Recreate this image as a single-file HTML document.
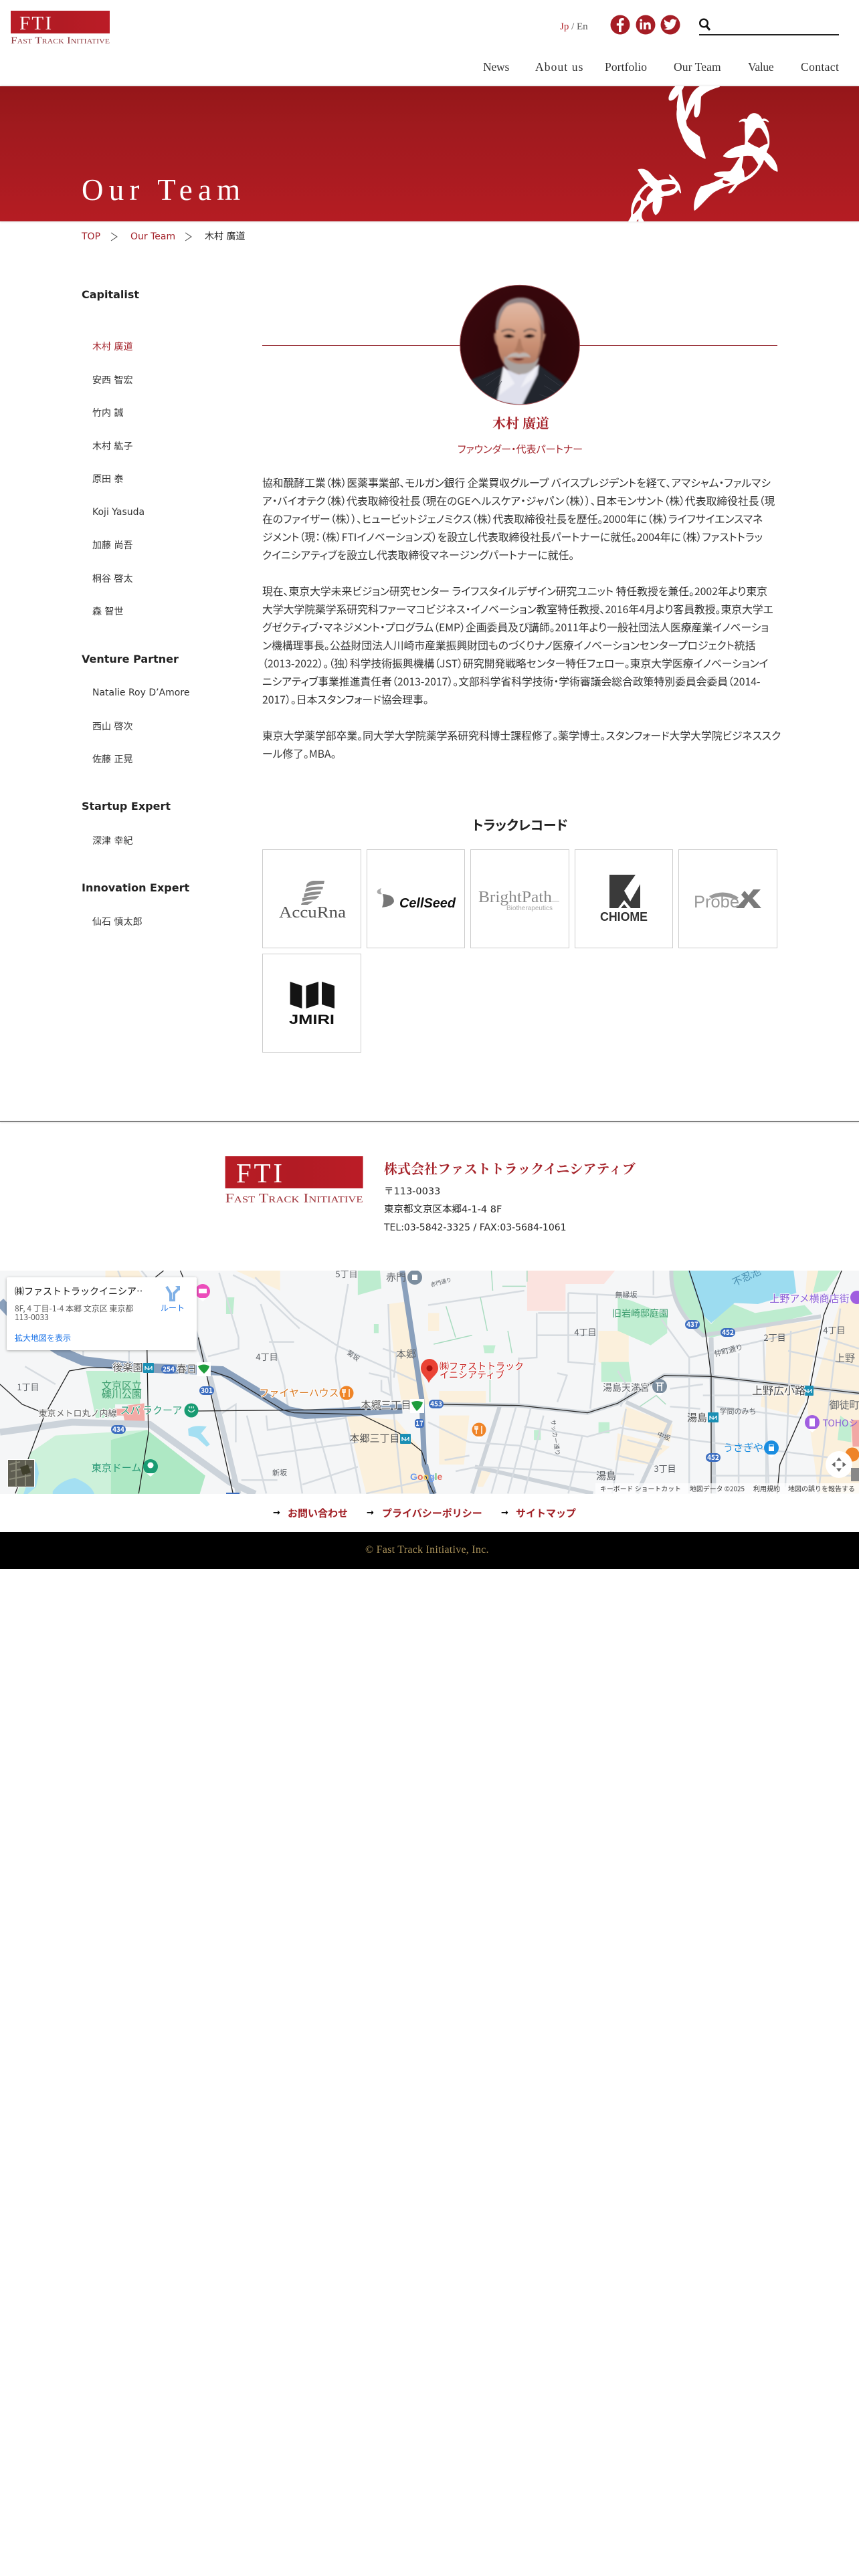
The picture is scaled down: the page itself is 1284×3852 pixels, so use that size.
<!DOCTYPE html>
<html lang="ja"><head><meta charset="utf-8"><title>木村 廣道 | Our Team</title>
<style>
html,body{margin:0;padding:0;background:#fff}
#p{position:relative;width:1284px;height:3852px;overflow:hidden;background:#fff;font-family:"DejaVu Sans","Noto Sans CJK JP",sans-serif;color:#222}
.a{position:absolute;white-space:nowrap}
.n{font-family:"Liberation Serif",serif;font-size:17.500px;line-height:24px;top:88px;color:#333}
.s{left:122px;font-weight:bold;font-size:16px;line-height:24px;color:#222}
.m{left:138px;font-size:14px;line-height:24px;color:#333}
.b{left:392px;font-family:"Noto Sans CJK JP",sans-serif;font-size:15.800px;line-height:27px;color:#333;font-feature-settings:"palt"}
.c{box-sizing:border-box;width:148px;height:148px;border:1px solid #ccc;top:1270px}
.l{font-family:"Noto Sans CJK JP",sans-serif;font-weight:bold;font-size:15px;line-height:24px;top:2251px;color:#a11f25}
.ar{font-family:"DejaVu Sans",sans-serif;font-size:13px;line-height:24px;top:2251px;color:#000;font-weight:bold}
svg text{font-family:"Noto Sans CJK JP",sans-serif}
.mp path{vector-effect:non-scaling-stroke}
</style></head><body><div id="p">

<!-- header logo -->
<svg class="a" style="left:0;top:0" width="180" height="72">
<defs><linearGradient id="lg" x1="0" x2="1"><stop offset="0" stop-color="#b81c25"/><stop offset=".5" stop-color="#b21b24"/><stop offset="1" stop-color="#bb1c26"/></linearGradient></defs>
<rect x="16" y="16" width="148" height="34" fill="url(#lg)"/>
<text x="29" y="44" fill="#fff" textLength="48" lengthAdjust="spacing" style="font-family:'Liberation Serif',serif;font-size:29px">FTI</text>
<text x="16" y="65" fill="#8f3a40" textLength="148" lengthAdjust="spacingAndGlyphs" style="font-family:'Liberation Serif',serif;font-size:14.5px;font-variant:small-caps">Fast Track Initiative</text>
</svg>

<!-- lang -->
<div class="a" style="left:837px;top:28px;font-family:'Liberation Serif',serif;font-size:15px;line-height:24px;color:#555"><span style="color:#b22a30">Jp</span> / En</div>
<!-- social -->
<svg class="a" style="left:910px;top:20px" width="110" height="36">
<circle cx="17" cy="17" r="14.5" fill="#a51d25"/><circle cx="55" cy="17" r="14.5" fill="#a51d25"/><circle cx="92" cy="17" r="14.5" fill="#a51d25"/>
<path d="M18.8 28v-9.6h3.2l.5-3.7h-3.7v-2.4c0-1.100.3-1.800 1.800-1.800h2v-3.300c-.4 0-1.500-.2-2.800-.2-2.800 0-4.800 1.700-4.800 4.900v2.800h-3.200v3.700h3.200V28z" fill="#fff"/>
<path d="M46.500 13.500h3.400V24h-3.400zM48.200 8.500a1.900 1.900 0 1 1 0 3.800 1.900 1.900 0 0 1 0-3.800zM52 13.500h3.200v1.500c.5-.9 1.700-1.800 3.400-1.800 3.500 0 4.200 2.300 4.200 5.300V24h-3.400v-4.800c0-1.200 0-2.700-1.700-2.700s-2 1.300-2 2.600V24H52z" fill="#fff"/>
<path d="M102 10.500c-.8.300-1.500.5-2.400.6.900-.5 1.500-1.300 1.800-2.300-.8.500-1.700.8-2.600 1a4.100 4.100 0 0 0-7 3.700c-3.400-.2-6.400-1.800-8.400-4.300-1.100 1.900-.5 4.300 1.300 5.500-.7 0-1.300-.2-1.900-.5 0 2 1.400 3.700 3.300 4.100-.6.200-1.200.2-1.900.1.500 1.600 2 2.800 3.800 2.800a8.300 8.300 0 0 1-6.100 1.700c1.800 1.200 4 1.800 6.300 1.800 7.600 0 11.900-6.400 11.700-12.200.8-.6 1.500-1.300 2.100-2z" fill="#fff"/>
</svg>
<!-- search -->
<svg class="a" style="left:1040px;top:24px" width="30" height="24"><circle cx="12" cy="10.500" r="5.800" fill="none" stroke="#111" stroke-width="2.400"/><path d="M16 15l5 6" stroke="#111" stroke-width="3"/></svg>
<div class="a" style="left:1045px;top:51px;width:209px;height:2px;background:#222"></div>

<!-- nav -->
<div class="a n" style="left:722px;letter-spacing:-.2px">News</div>
<div class="a n" style="left:800px;letter-spacing:1.100px">About us</div>
<div class="a n" style="left:904px;letter-spacing:.1px">Portfolio</div>
<div class="a n" style="left:1007px;letter-spacing:.1px">Our Team</div>
<div class="a n" style="left:1118px;letter-spacing:-.3px">Value</div>
<div class="a n" style="left:1197px;letter-spacing:.4px">Contact</div>

<!-- hero -->
<div class="a" style="left:0;top:129px;width:1284px;height:202px;background:linear-gradient(#951619,#a01a1e 30%,#b51c23);box-shadow:0 0 3px rgba(0,0,0,.25)"></div>
<div class="a" style="left:122px;top:256px;font-family:'Liberation Serif',serif;font-size:45px;line-height:56px;letter-spacing:8.200px;color:#fff">Our Team</div>
<svg class="a" style="left:900px;top:120px" width="384" height="220" viewBox="0 0 1152 660">
<g fill="#fff" fill-rule="evenodd" stroke="#fff" stroke-width="5" stroke-linejoin="round">
<path d="M330 28L365 28C358 45 345 58 332 72C322 85 310 92 302 88C296 75 312 45 330 28Z"/>
<path d="M355 40C345 65 335 100 338 130C332 165 342 205 358 240C372 285 410 330 462 350C458 325 440 300 436 255C420 240 395 232 378 205C370 170 372 130 392 85C402 60 418 40 440 28L525 28C490 38 462 50 442 72C438 95 442 125 434 150C428 168 416 170 414 150C414 125 420 105 420 95C405 115 392 140 378 175C368 130 358 85 355 40Z"/>
<path d="M682 150C700 150 712 165 716 178C722 172 735 172 745 186C735 180 726 178 720 182C735 205 750 240 748 280C750 300 735 312 735 325C765 345 785 375 785 408C760 400 742 372 725 352C718 380 700 405 670 432C650 448 625 452 605 470C590 490 578 508 568 505C575 490 590 478 602 462C570 468 540 478 510 495C480 510 445 560 415 582C410 550 425 500 445 478C480 470 525 452 555 432C540 432 515 435 503 422C520 405 560 415 575 410C600 385 605 360 625 340C600 345 565 350 545 340C565 315 600 295 640 292C648 270 640 230 642 205C645 185 640 182 628 182C622 182 618 185 616 186C624 176 640 172 650 178C655 165 665 150 682 150ZM650 275C655 260 672 245 680 228C690 205 712 205 722 225C735 245 745 265 745 285C730 290 715 300 705 306C690 300 665 290 650 275ZM630 340C640 335 660 335 675 338C685 350 695 365 703 378C698 390 690 410 640 440C630 425 640 405 625 395C620 375 635 360 630 340ZM540 445L580 455C565 470 550 470 538 462Z"/>
<path d="M163 402C185 395 205 405 220 425C232 438 240 448 252 452C270 445 300 445 320 452C310 440 308 432 302 425C315 432 325 442 330 452C345 462 348 480 352 505C348 498 345 490 340 485C335 505 310 518 280 516C262 525 248 530 238 535C255 530 265 528 268 530C265 555 262 590 240 602C228 590 225 570 232 540C210 550 190 565 178 590C172 610 176 620 185 632L165 632L165 615L152 632L120 632C128 620 135 612 132 590C132 545 165 485 210 462L195 450C180 430 172 418 163 402ZM265 470C285 462 315 460 330 466C335 478 328 490 315 492C300 498 285 505 270 500C262 492 262 480 265 470ZM210 470C195 478 180 495 168 515C165 530 185 545 205 545C190 525 225 500 232 490C225 485 218 478 210 470ZM135 600C140 570 150 535 175 535C180 550 175 570 155 590C145 600 140 608 135 600Z"/>
</g></svg>

<!-- breadcrumb -->
<div class="a" style="left:122px;top:342px;font-size:14px;line-height:24px;color:#a3222a">TOP</div>
<svg class="a" style="left:164px;top:346px" width="14" height="16"><path d="M2 2l9 6-9 6" fill="none" stroke="#444" stroke-width="1"/></svg>
<div class="a" style="left:195px;top:342px;font-size:14px;line-height:24px;color:#a3222a">Our Team</div>
<svg class="a" style="left:275px;top:346px" width="14" height="16"><path d="M2 2l9 6-9 6" fill="none" stroke="#444" stroke-width="1"/></svg>
<div class="a" style="left:306px;top:342px;font-size:14px;line-height:24px;color:#222">木村 廣道</div>

<!-- sidebar -->
<div class="a s" style="top:429px">Capitalist</div>
<div class="a m" style="top:507px;color:#a3222a">木村 廣道</div>
<div class="a m" style="top:557px">安西 智宏</div>
<div class="a m" style="top:606px">竹内 誠</div>
<div class="a m" style="top:656px">木村 紘子</div>
<div class="a m" style="top:705px">原田 泰</div>
<div class="a m" style="top:754px">Koji Yasuda</div>
<div class="a m" style="top:804px">加藤 尚吾</div>
<div class="a m" style="top:854px">桐谷 啓太</div>
<div class="a m" style="top:903px">森 智世</div>
<div class="a s" style="top:974px">Venture Partner</div>
<div class="a m" style="top:1024px">Natalie Roy D’Amore</div>
<div class="a m" style="top:1075px">西山 啓次</div>
<div class="a m" style="top:1124px">佐藤 正晃</div>
<div class="a s" style="top:1194px">Startup Expert</div>
<div class="a m" style="top:1246px">深津 幸紀</div>
<div class="a s" style="top:1316px">Innovation Expert</div>
<div class="a m" style="top:1367px">仙石 慎太郎</div>

<!-- rule + photo -->
<div class="a" style="left:392px;top:516px;width:770px;height:1px;background:#8f1c24"></div>
<svg class="a" style="left:640px;top:410px" width="300" height="300" viewBox="0 0 900 900">
<defs><clipPath id="ph"><circle cx="411" cy="317" r="267"/></clipPath>
<filter id="bl" x="-5%" y="-5%" width="110%" height="110%"><feGaussianBlur stdDeviation="4"/></filter>
<linearGradient id="sk" x1="0" y1="0" x2="0" y2="1"><stop offset="0" stop-color="#e2bcab"/><stop offset=".3" stop-color="#dba98f"/><stop offset=".65" stop-color="#c68c70"/><stop offset="1" stop-color="#a4705c"/></linearGradient>
<radialGradient id="bgp" cx=".5" cy=".4" r=".7"><stop offset="0" stop-color="#2c0508"/><stop offset="1" stop-color="#430a10"/></radialGradient></defs>
<g clip-path="url(#ph)">
<rect width="900" height="900" fill="url(#bgp)"/>
<g filter="url(#bl)">
<path d="M195 472L335 415L350 460L420 590L495 405L612 490L650 620L150 620Z" fill="#24262e"/>
<path d="M338 412C370 450 440 455 497 402L490 450L420 590L308 570Z" fill="#dfe0ec"/>
<path d="M338 410L388 490L316 545ZM497 402L470 470L415 510L440 460Z" fill="#f0f0f6"/>
<path d="M296 262C290 290 303 322 320 328L330 280ZM528 268C522 300 510 318 498 320L505 265Z" fill="#a87a66"/>
<path d="M303 250C298 170 340 105 415 105C485 105 522 165 520 255C518 330 500 420 410 450C350 440 320 380 312 330C308 300 303 280 303 250Z" fill="url(#sk)"/>
<path d="M303 250C298 180 335 105 415 105C485 105 522 165 520 255L508 248C510 210 492 165 462 140C430 122 385 124 352 145C328 170 318 205 314 250Z" fill="#8f8284"/>
<path d="M488 190Q512 240 502 320L480 410Q510 360 518 255Z" fill="#6f4c42" opacity=".6"/>
<path d="M340 400C358 440 400 455 440 445C472 432 494 405 498 372L480 392C462 405 440 400 418 402C390 404 360 390 342 368Z" fill="#a9a29f"/>
<path d="M348 378C365 352 395 348 408 358C425 348 450 350 460 374C440 368 420 372 405 374C385 368 365 372 348 378Z" fill="#bdb6b2"/>
<path d="M375 380Q405 372 432 380Q405 396 375 380Z" fill="#6e2a28"/>
<path d="M336 278Q360 260 388 280Q360 294 336 278ZM428 280Q455 258 480 278Q455 294 428 280Z" fill="#3c2526"/>
<circle cx="362" cy="277" r="8" fill="#100a0a"/><circle cx="452" cy="277" r="8" fill="#100a0a"/>
<path d="M328 258Q360 238 390 258M428 258Q458 236 486 256" fill="none" stroke="#6f5e58" stroke-width="7"/>
<path d="M405 290Q395 335 385 342Q408 354 432 342Q420 330 415 290Z" fill="#b07a60"/>
</g>
<path d="M240 470L300 440M260 500L325 450M290 540L330 480M520 450L590 500M520 500L570 530M500 540L560 560" stroke="#3a3c46" stroke-width="2"/>
</g>
<circle cx="411" cy="317" r="268" fill="none" stroke="#9e4a50" stroke-width="3"/>
</svg>
<div class="a" style="left:736px;top:618px;font-family:'Noto Serif CJK SC','Noto Serif CJK JP',serif;font-weight:bold;font-size:20px;line-height:28px;color:#a52229">木村 廣道</div>
<div class="a" style="left:684px;top:660px;font-family:'Noto Sans CJK JP',sans-serif;font-size:15px;line-height:24px;color:#a5282f;font-feature-settings:'palt'">ファウンダー・代表パートナー</div>

<!-- bio -->
<div class="a b" style="top:708px">協和醗酵工業（株）医薬事業部、モルガン銀行 企業買収グループ バイスプレジデントを経て、アマシャム・ファルマシ<br>ア・バイオテク（株）代表取締役社長（現在のGEヘルスケア・ジャパン（株））、日本モンサント（株）代表取締役社長（現<br>在のファイザー（株））、ヒュービットジェノミクス（株）代表取締役社長を歴任。2000年に（株）ライフサイエンスマネ<br>ジメント（現：（株）FTIイノベーションズ）を設立し代表取締役社長パートナーに就任。2004年に（株）ファストトラッ<br>クイニシアティブを設立し代表取締役マネージングパートナーに就任。<br><br>現在、東京大学未来ビジョン研究センター ライフスタイルデザイン研究ユニット 特任教授を兼任。2002年より東京<br>大学大学院薬学系研究科ファーマコビジネス・イノベーション教室特任教授、2016年4月より客員教授。東京大学エ<br>グゼクティブ・マネジメント・プログラム（EMP）企画委員及び講師。2011年より一般社団法人医療産業イノベーショ<br>ン機構理事長。公益財団法人川崎市産業振興財団ものづくりナノ医療イノベーションセンタープロジェクト統括<br>（2013-2022）。（独）科学技術振興機構（JST）研究開発戦略センター特任フェロー。東京大学医療イノベーションイ<br>ニシアティブ事業推進責任者（2013-2017）。文部科学省科学技術・学術審議会総合政策特別委員会委員（2014-<br>2017）。日本スタンフォード協会理事。<br><br>東京大学薬学部卒業。同大学大学院薬学系研究科博士課程修了。薬学博士。スタンフォード大学大学院ビジネススク<br>ール修了。MBA。</div>

<!-- track record -->
<div class="a" style="left:706px;top:1220px;font-family:'Noto Sans CJK JP',sans-serif;font-weight:bold;font-size:19.700px;line-height:26px;color:#222;font-feature-settings:'palt'">トラックレコード</div>
<div class="a c" style="left:392px"></div>
<div class="a c" style="left:548px;width:147px"></div>
<div class="a c" style="left:703px"></div>
<div class="a c" style="left:859px;width:147px"></div>
<div class="a c" style="left:1014px"></div>
<div class="a c" style="left:392px;top:1426px"></div>

<svg class="a" style="left:392px;top:1270px" width="772" height="305">
<!-- AccuRna -->
<g fill="#8c8c8c"><path d="M76 47Q67 49 66 54L66 57Q73 52 92 52L93 47ZM65 59Q73 55 91 56L90 60Q74 60 64 64ZM63 66Q74 63 88 63L87 67Q72 68 62 72ZM60 73Q72 70 85 70Q82 74 78 75Q68 75 60 78ZM59 80Q68 78 76 78L68 83H58Z"/></g>
<text x="25" y="102" textLength="100" lengthAdjust="spacingAndGlyphs" fill="#555" style="font-family:'Liberation Serif',serif;font-size:24px">AccuRna</text>
<!-- CellSeed -->
<path d="M178 58Q170 61 172 65Q174 68 179 67Q175 63 178 58Z" fill="#aaa"/>
<path d="M180 67Q197 68 197 78Q195 85 179 87Q183 77 180 67Z" fill="#777"/>
<text x="205" y="87" textLength="84" lengthAdjust="spacingAndGlyphs" fill="#111" style="font-family:'Liberation Sans',sans-serif;font-size:20px;font-weight:bold;font-style:italic">CellSeed</text>
<!-- BrightPath -->
<text x="323" y="79" textLength="110" lengthAdjust="spacingAndGlyphs" fill="#8a8a8a" style="font-family:'Liberation Serif',serif;font-size:24px">BrightPath</text>
<rect x="433" y="77" width="11" height="1" fill="#bbb"/>
<text x="365" y="91" textLength="69" lengthAdjust="spacingAndGlyphs" fill="#aaa" style="font-family:'Liberation Sans',sans-serif;font-size:10.5px">Biotherapeutics</text>
<!-- CHIOME -->
<path d="M519 38H558L541 62L550 78L565 52V88H551L541 76L532 88H519ZM541 82L546 88H536Z" fill="#3a3a3a"/>
<text x="505" y="107" textLength="71" lengthAdjust="spacingAndGlyphs" fill="#333" style="font-family:'Liberation Sans',sans-serif;font-size:18px;font-weight:bold">CHIOME</text>
<!-- ProbeX -->
<text x="645" y="87" textLength="68" lengthAdjust="spacingAndGlyphs" fill="#999" style="font-family:'Liberation Sans',sans-serif;font-size:25px">Probe</text>
<path d="M668 70Q690 58 712 72L708 76Q688 66 672 74Z" fill="#999"/>
<path d="M708 88H720L727 78L735 88H746L733 73L745 60H734L727 69L721 62L716 68L721 74Z" fill="#7a7a7a"/>
<!-- JMIRI -->
<path d="M41.600 198L59.400 204V238L41.600 232ZM65.500 204L84 198V232L65.500 238ZM89 198L108 204V238L89 232Z" fill="#141414"/>
<text x="40" y="261" textLength="68" lengthAdjust="spacingAndGlyphs" fill="#111" style="font-family:'Liberation Sans',sans-serif;font-size:19px;font-weight:bold">JMIRI</text>
</svg>

<!-- footer rule -->
<div class="a" style="left:0;top:1676px;width:1284px;height:2px;background:#808080;box-shadow:0 1px 2px rgba(0,0,0,.12)"></div>

<!-- footer logo -->
<svg class="a" style="left:330px;top:1720px" width="220" height="84">
<rect x="6.600" y="9" width="206" height="48" fill="url(#lg)"/>
<text x="23" y="48" fill="#fff" textLength="69" lengthAdjust="spacing" style="font-family:'Liberation Serif',serif;font-size:41px">FTI</text>
<text x="6.600" y="78" fill="#a0343b" textLength="206" lengthAdjust="spacingAndGlyphs" style="font-family:'Liberation Serif',serif;font-size:20px;font-variant:small-caps">Fast Track Initiative</text>
</svg>
<div class="a" style="left:574px;top:1733px;font-family:'Noto Serif CJK JP',serif;font-weight:bold;font-size:20px;line-height:28px;color:#a52229">株式会社ファストトラックイニシアティブ</div>
<div class="a" style="left:574px;top:1770px;font-size:14.500px;line-height:24px;color:#222">〒113-0033</div>
<div class="a" style="left:574px;top:1797px;font-size:14.500px;line-height:24px;color:#222">東京都文京区本郷4-1-4 8F</div>
<div class="a" style="left:574px;top:1824px;font-size:14px;line-height:24px;color:#222">TEL:03-5842-3325 / FAX:03-5684-1061</div>

<!-- map -->
<svg class="a mp" style="left:0;top:1900px" width="1284" height="334" viewBox="0 0 1284 334">
<rect width="1284" height="334" fill="#f5f6f7"/>
<!-- zoom-7 layer -->
<g transform="translate(0,-10) scale(.4146,.3333)" fill="none">
<path d="M380 30H500L520 70H380ZM850 30L1010 120V30ZM1400 180L1460 170L1500 400L1550 630L1450 640L1420 400ZM1250 680L1430 700L1530 850L1568 1030H1320Z" fill="#fbf0dc"/>
<path d="M1290 30H1370L1375 110L1290 140ZM1348 270H1365V310H1348ZM815 150H845L840 225H815Z" fill="#bdeccf"/>
<path d="M310 480H505V630H415V690H345Z" fill="#c1eed2"/>
<path d="M60 1032L112 845L200 770L530 745L740 950L720 1032Z" fill="#cdf1da"/>
<path d="M400 790L530 745L740 950L720 1032H400Z" fill="#aee8c4"/>
<path d="M415 650H455L460 635L520 625L522 708H450L445 680H415Z" fill="#f3aaa6"/>
<path d="M678 740Q700 720 745 730L725 760L757 810L745 820L710 780L680 770Z" fill="#a4dff2"/>
<path d="M120 900Q130 860 140 940L130 1000L100 1032H85ZM190 1020Q220 970 270 960Q330 990 340 1032H190Z" fill="#a4dff2"/>
<path d="M0 755L260 710L540 720L830 980L920 1032" stroke="#ccd3da" stroke-width="10"/>
<path d="M700 300L760 520L860 1032" stroke="#ccd3da" stroke-width="8"/>
<path d="M790 40L860 330V380L750 415M840 50L920 100L1080 290M920 60L1060 240L1220 370L1500 525M1255 90L1210 420L1220 520L1300 1030M940 180L1020 500L1090 1030M970 350H1060M1380 380L1430 400L1420 510M1330 490L1400 510L1410 590L1375 570V520M800 670L850 630V800M890 680L960 1030M960 680L965 745L1250 690M930 860L1290 800M1130 670L1210 1030M870 970H1000M1090 990L1290 910M1400 180L1410 560L1450 1030M1320 1030L1568 960M300 390V420M465 390V440M90 460L200 540M425 30L435 60M510 30L530 60" stroke="#d6dbe0" stroke-width="2.500"/>
<path d="M0 170L90 290L215 390L300 435L500 465L800 480L1040 660L1100 675L1450 650" stroke="#8aa0bc" stroke-width="14"/>
<path d="M1450 30L1520 600L1530 900L1565 1032" stroke="#8aa0bc" stroke-width="8"/>
<path d="M55 1030L160 680L250 480L320 465L515 465M500 1030L535 760L530 380M715 330L840 1030M760 480L830 510L1020 655L1060 668L1300 675L1440 760L1520 840L1568 1030M700 660L1500 650M0 540L80 630L150 665M590 30L560 60M650 30L660 60" stroke="#222" stroke-width="1.300"/>
</g>
<!-- zoom-8 layer -->
<g transform="translate(640,-10) scale(.4107,.3333)" fill="none">
<path d="M360 30H680L640 90H500V210H360Z" fill="#fbe3df"/>
<path d="M620 300H730V500L620 440ZM0 220H40V300H0ZM40 570H210V640H40ZM720 640L890 720L880 800L700 720ZM690 760L880 820L800 900L680 880ZM40 680H150L130 900H40ZM180 930H230L200 1000H180ZM1230 280L1430 250L1370 620L1340 680L1210 640L1230 400ZM1500 170H1568V1030H1420L1380 640ZM1380 30H1440L1410 170H1370Z" fill="#fbf0dc"/>
<path d="M690 150L740 165L870 230L870 310L810 365L690 300ZM630 440H730L740 530H630ZM620 710H660L660 760H620ZM385 745H410V790H385ZM200 365H245L238 400H205ZM1420 30H1500L1450 120L1400 130ZM1500 680L1540 720L1540 800L1490 790Z" fill="#c1eed2"/>
<path d="M960 30L1000 230L1030 270L1100 175L1190 220L1370 185L1400 225L1030 330L1000 320L920 200L890 120L885 30Z" fill="#bdeccf"/>
<path d="M945 30H1330L1340 130L1200 180L1115 175L1030 265L1000 230Z" fill="#9cdcf0"/>
<path d="M1540 700H1568V820H1545Z" fill="#f2a8a5"/>
<path d="M885 30Q880 200 1000 320L1430 235" stroke="#cdd3d9" stroke-width="6"/>
<path d="M40 630L330 635L580 668L690 625L860 500L1030 505L1568 580" stroke="#cdd3d9" stroke-width="6"/>
<path d="M1030 330L1040 1030" stroke="#cdd3d9" stroke-width="7"/>
<path d="M260 640L160 1030M720 620L880 710L760 1030M170 910L600 1030" stroke="#cdd3d9" stroke-width="6"/>
<path d="M0 185L350 120M510 130L830 150L890 140M400 220H610M395 220V320H610M510 130V440L610 450M615 140V320L590 650M395 320V420L330 425M330 420V630M690 480L730 560L700 640M470 490L505 500L470 620M320 640L230 1030M375 640L290 1030M420 680L350 1030M0 710L150 800L330 815L670 925M350 730L580 775L700 735L960 790L1470 870M560 775L510 1030M720 650L670 1030M690 860L820 900M725 790L850 830M60 880L150 860M100 930L180 910L750 945M850 250L950 420L950 1030M950 420L1230 340L1430 280M880 560L1000 540M880 640L990 650M1000 590H1230L1230 1030M1050 640L1360 690M1130 400L1130 1030M1220 340L1240 1030M1320 300L1300 1000M1310 390L1568 460M1440 330L1568 380M1500 200L1420 1030M1030 950L1568 950M820 30V140" stroke="#d6dbe0" stroke-width="2.500"/>
<path d="M65 190L100 330M190 150L215 300M20 360L160 320M290 300L305 400M230 30L235 120M270 100H355M225 450V620M770 640L830 590L865 630M360 30V80" stroke="#a9dcc0" stroke-width="1.500"/>
<path d="M-10 900L15 1032" stroke="#8aa0bc" stroke-width="8"/>
<path d="M40 630L330 635L580 668L690 625L860 500L1030 505L1568 580M950 30L1000 220L1030 500L1030 1030M1505 30L1440 230L1380 620L1280 900L1270 1030M-10 950L20 1030" stroke="#222" stroke-width="1.300"/>
</g>

<!-- satellite -->
<rect x="11" y="282" width="41" height="42" fill="#fff"/>
<rect x="12" y="283" width="39" height="40" fill="#5f5e52"/>
<path d="M14 290L30 286M16 300L48 294M14 312L46 306M24 284V322M38 284V322" stroke="#8a8a78" stroke-width="2" fill="none"/>
<path d="M30 294L42 290L46 302L34 306Z" fill="#3f3f2c"/>

<!-- shields -->
<g font-size="10" font-weight="bold" text-anchor="middle" fill="#fff" style="font-size:10px">
<g fill="#3d6ec0"><rect x="241" y="141" width="22" height="13" rx="6.500"/><rect x="298" y="173" width="22" height="13" rx="6.500"/><rect x="166" y="231" width="22" height="13" rx="6.500"/><rect x="620" y="222" width="14" height="13" rx="4"/><rect x="641" y="193" width="22" height="13" rx="6.500"/><rect x="1024" y="74" width="22" height="13" rx="6.500"/><rect x="1077" y="86" width="22" height="13" rx="6.500"/><rect x="1055" y="273" width="22" height="13" rx="6.500"/><rect x="338" y="332" width="20" height="6"/></g>
<text x="252" y="151">254</text><text x="309" y="183">301</text><text x="177" y="241">434</text><text x="627" y="232">17</text><text x="652" y="203">453</text><text x="1035" y="84">437</text><text x="1088" y="96">452</text><text x="1066" y="283">452</text>
</g>
<!-- pins -->
<g>
<circle cx="303" cy="31" r="11" fill="#ec4dbb"/><path d="M297 41L303 46L309 41Z" fill="#fff"/><rect x="297" y="27" width="12" height="7" fill="#fff"/>
<circle cx="620" cy="10" r="11" fill="#7b8d9e"/><rect x="616" y="6" width="8" height="8" fill="#fff"/>
<circle cx="518" cy="183" r="10.500" fill="#ef8427"/><path d="M514 177V189M522 177V189M512 177V182H516V177" stroke="#fff" stroke-width="1.500" fill="none"/><path d="M513 193L518 198L523 193Z" fill="#fff"/>
<circle cx="286" cy="209" r="10.500" fill="#189b72"/><path d="M281 208Q286 215 291 208M283 203V206M286 203V206M289 203V206" stroke="#fff" stroke-width="1.300" fill="none"/>
<circle cx="225" cy="293" r="11" fill="#189b72"/><circle cx="225" cy="291" r="4.500" fill="#fff"/><path d="M219 303L225 308L231 303Z" fill="#fff"/>
<rect x="294" y="137" width="21" height="21" fill="#fff"/><path d="M296 143Q305 138 313 143Q312 148 305 154Q298 148 296 143Z" fill="#1f9d3d"/>
<rect x="613" y="192" width="21" height="21" fill="#fff"/><path d="M615 197Q623 193 632 197Q631 203 623 210Q617 203 615 197Z" fill="#1f9d3d"/>
<rect x="214" y="138" width="16" height="15" rx="1" fill="#1a8fb4"/><rect x="598" y="244" width="16" height="15" rx="1" fill="#1a8fb4"/><rect x="1058" y="212" width="16" height="15" rx="1" fill="#1a8fb4"/><rect x="1200" y="172" width="16" height="15" rx="1" fill="#1a8fb4"/>
<g stroke="#fff" stroke-width="1.200" fill="none"><path d="M217 143V149M222 143V149M227 143V149M217 143Q222 152 227 143"/><path d="M601 249V255M606 249V255M611 249V255M601 249Q606 258 611 249"/><path d="M1061 217V223M1066 217V223M1071 217V223M1061 217Q1066 226 1071 217"/><path d="M1203 177V183M1208 177V183M1213 177V183M1203 177Q1208 186 1213 177"/></g>
<circle cx="716" cy="238" r="10.500" fill="#ef8427"/><path d="M712 232V244M720 232V244M710 232V237H714V232" stroke="#fff" stroke-width="1.500" fill="none"/><path d="M711 248L716 253L721 248Z" fill="#fff"/>
<circle cx="1274" cy="275" r="10.500" fill="#ef8427"/>
<circle cx="986" cy="173" r="11" fill="#7b8d9e"/><path d="M980 168H992M982 172H990M983 168V180M989 168V180" stroke="#fff" stroke-width="1.600" fill="none"/><path d="M980 183L986 188L992 183Z" fill="#fff"/>
<circle cx="1153" cy="265" r="11" fill="#1a8de0"/><rect x="1149" y="263" width="8" height="7" fill="#fff"/><path d="M1150 263V260H1156V263" stroke="#fff" fill="none"/><path d="M1147 275L1153 280L1159 275Z" fill="#fff"/>
<circle cx="1214" cy="227" r="11" fill="#a05ee0"/><rect x="1210" y="221" width="8" height="12" fill="#fff"/><path d="M1208 237L1214 242L1220 237Z" fill="#fff"/>
<circle cx="1281" cy="40" r="10" fill="#a05ee0"/>
</g>

<!-- labels -->
<g style="font-size:13px" fill="#5f6368" text-anchor="middle">
<text x="518" y="10" style="font-size:13px">5丁目</text>
<text x="592" y="15" style="font-size:15px">赤門</text>
<text x="399" y="134" style="font-size:13px">4丁目</text>
<text x="607" y="130" style="font-size:15px">本郷</text>
<text x="42" y="179" style="font-size:13px">1丁目</text>
<text x="191" y="150" style="font-size:15px" fill="#555" stroke="#fff" stroke-width="2" paint-order="stroke">後楽園</text>
<text x="279" y="152" style="font-size:15px" fill="#555" stroke="#fff" stroke-width="2" paint-order="stroke">春日</text>
<text x="182" y="177" style="font-size:15px" fill="#3a9b6c">文京区立</text>
<text x="182" y="190" style="font-size:15px" fill="#3a9b6c">礫川公園</text>
<text x="447" y="188" style="font-size:15px" fill="#d8771f" stroke="#fff" stroke-width="2" paint-order="stroke">ファイヤーハウス</text>
<text x="577" y="206" style="font-size:15px" fill="#555" stroke="#fff" stroke-width="2" paint-order="stroke">本郷三丁目</text>
<text x="116" y="218" style="font-size:13px" fill="#555" stroke="#fff" stroke-width="2" paint-order="stroke">東京メトロ丸ノ内線</text>
<text x="226" y="214" style="font-size:15px" fill="#2a9a76" stroke="#fff" stroke-width="1.500" paint-order="stroke">スパ ラクーア</text>
<text x="560" y="256" style="font-size:15px" fill="#555">本郷三丁目</text>
<text x="174" y="300" style="font-size:15px" fill="#2a9a76">東京ドーム</text>
<text x="418" y="306" style="font-size:11px">新坂</text>
<text transform="translate(526,130) rotate(35)" style="font-size:10px">菊坂</text>
<text transform="translate(660,20) rotate(-15)" style="font-size:8px">赤門通り</text>
<text x="936" y="40" style="font-size:11px">無縁坂</text>
<text x="957" y="69" style="font-size:14px" fill="#3a9b6c">旧岩崎邸庭園</text>
<text x="875" y="97" style="font-size:13px">4丁目</text>
<text transform="translate(1118,14) rotate(-25)" style="font-size:15px" fill="#4a8fb0">不忍池</text>
<text x="1210" y="47" style="font-size:15px" fill="#8a5cd6" stroke="#fff" stroke-width="1.500" paint-order="stroke">上野アメ横商店街</text>
<text x="1158" y="105" style="font-size:13px">2丁目</text>
<text x="1247" y="94" style="font-size:13px">4丁目</text>
<text x="1263" y="136" style="font-size:15px">上野</text>
<text transform="translate(1090,123) rotate(-15)" style="font-size:11px">仲町通り</text>
<text x="936" y="180" style="font-size:14px" stroke="#fff" stroke-width="2" paint-order="stroke">湯島天満宮</text>
<text x="1164" y="185" style="font-size:16px" fill="#444" stroke="#fff" stroke-width="2" paint-order="stroke">上野広小路</text>
<text x="1262" y="206" style="font-size:15px">御徒町</text>
<text x="1103" y="214" style="font-size:11px">学問のみち</text>
<text x="1042" y="225" style="font-size:15px" fill="#555">湯島</text>
<text x="1256" y="233" style="font-size:14px" fill="#8a5cd6">TOHOシ</text>
<text transform="translate(991,251) rotate(20)" style="font-size:10px">中坂</text>
<text transform="translate(827,250) rotate(82)" style="font-size:9px">サッカー通り</text>
<text x="1111" y="270" style="font-size:15px" fill="#1a8de0">うさぎや</text>
<text x="994" y="301" style="font-size:13px">3丁目</text>
<text x="906" y="312" style="font-size:15px">湯島</text>
</g>

<!-- marker -->
<path d="M642 132C634 132 629 139 629 146C629 155 638 160 641 168C644 160 655 155 655 146C655 139 650 132 642 132Z" fill="#ea4335"/>
<circle cx="642" cy="146" r="4.500" fill="#a8120f"/>
<g style="font-size:14px" fill="#c5221f" stroke="#fff" stroke-width="2" paint-order="stroke">
<text x="657" y="148" style="font-size:14px">㈱ファストトラック</text>
<text x="657" y="161" style="font-size:14px">イニシアティブ</text></g>

<!-- google -->
<text x="613" y="313" style="font-family:'Liberation Sans',sans-serif;font-size:14px;font-weight:bold"><tspan fill="#6a9cf0">G</tspan><tspan fill="#e56b60">o</tspan><tspan fill="#f2c34c">o</tspan><tspan fill="#6a9cf0">g</tspan><tspan fill="#6ac27e">l</tspan><tspan fill="#e56b60">e</tspan></text>

<!-- control -->
<circle cx="1254" cy="290" r="20" fill="#fff"/>
<path d="M1254 280l-3 4h6zM1254 300l-3-4h6zM1244 290l4-3v6zM1264 290l-4-3v6z" fill="#666" stroke="#666"/>
<rect x="1272" y="295" width="12" height="20" fill="#888"/>

<!-- attribution -->
<rect x="890" y="318" width="394" height="16" fill="#fff" opacity=".7"/>
<g fill="#333" style="font-size:10px">
<text x="897" y="330" textLength="121" lengthAdjust="spacingAndGlyphs" style="font-size:10px">キーボード ショートカット</text>
<text x="1031" y="330" textLength="82" lengthAdjust="spacingAndGlyphs" style="font-size:10px">地図データ ©2025</text>
<text x="1126" y="330" style="font-size:10px">利用規約</text>
<text x="1178" y="330" style="font-size:10px">地図の誤りを報告する</text>
</g>
</svg>

<!-- map card -->
<div class="a" style="left:10px;top:1910px;width:284px;height:109px;background:#fff;border-radius:2px;box-shadow:0 1px 4px rgba(0,0,0,.3)"></div>
<div class="a" style="left:22px;top:1921px;width:192px;font-family:'Noto Sans CJK JP',sans-serif;font-size:14px;line-height:20px;color:#111;overflow:hidden">㈱ファストトラックイニシア…</div>
<div class="a" style="left:22px;top:1950px;font-family:'Noto Sans CJK JP',sans-serif;font-size:12px;line-height:13px;color:#5b5b5b">8F, 4 丁目-1-4 本郷 文京区 東京都<br>113-0033</div>
<div class="a" style="left:22px;top:1992px;font-family:'Noto Sans CJK JP',sans-serif;font-size:12px;line-height:18px;color:#1a73e8">拡大地図を表示</div>
<svg class="a" style="left:246px;top:1922px" width="24" height="24"><path d="M3 2L9 12V23H14V12L21 5" fill="none" stroke="#7fb0e6" stroke-width="4"/><path d="M16 1H23V8Z" fill="#7fb0e6"/></svg>
<div class="a" style="left:240px;top:1947px;font-family:'Noto Sans CJK JP',sans-serif;font-size:12px;line-height:18px;color:#1a73e8">ルート</div>

<!-- links -->
<div class="a ar" style="left:408px">→</div><div class="a l" style="left:430px">お問い合わせ</div>
<div class="a ar" style="left:548px">→</div><div class="a l" style="left:571px">プライバシーポリシー</div>
<div class="a ar" style="left:749px">→</div><div class="a l" style="left:771px">サイトマップ</div>

<!-- copyright -->
<div class="a" style="left:0;top:2291px;width:1284px;height:55px;background:#000"></div>
<div class="a" style="left:546px;top:2306px;font-family:'Liberation Serif',serif;font-size:16px;line-height:24px;letter-spacing:.25px;color:#a89058">© Fast Track Initiative, Inc.</div>

</div></body></html>
